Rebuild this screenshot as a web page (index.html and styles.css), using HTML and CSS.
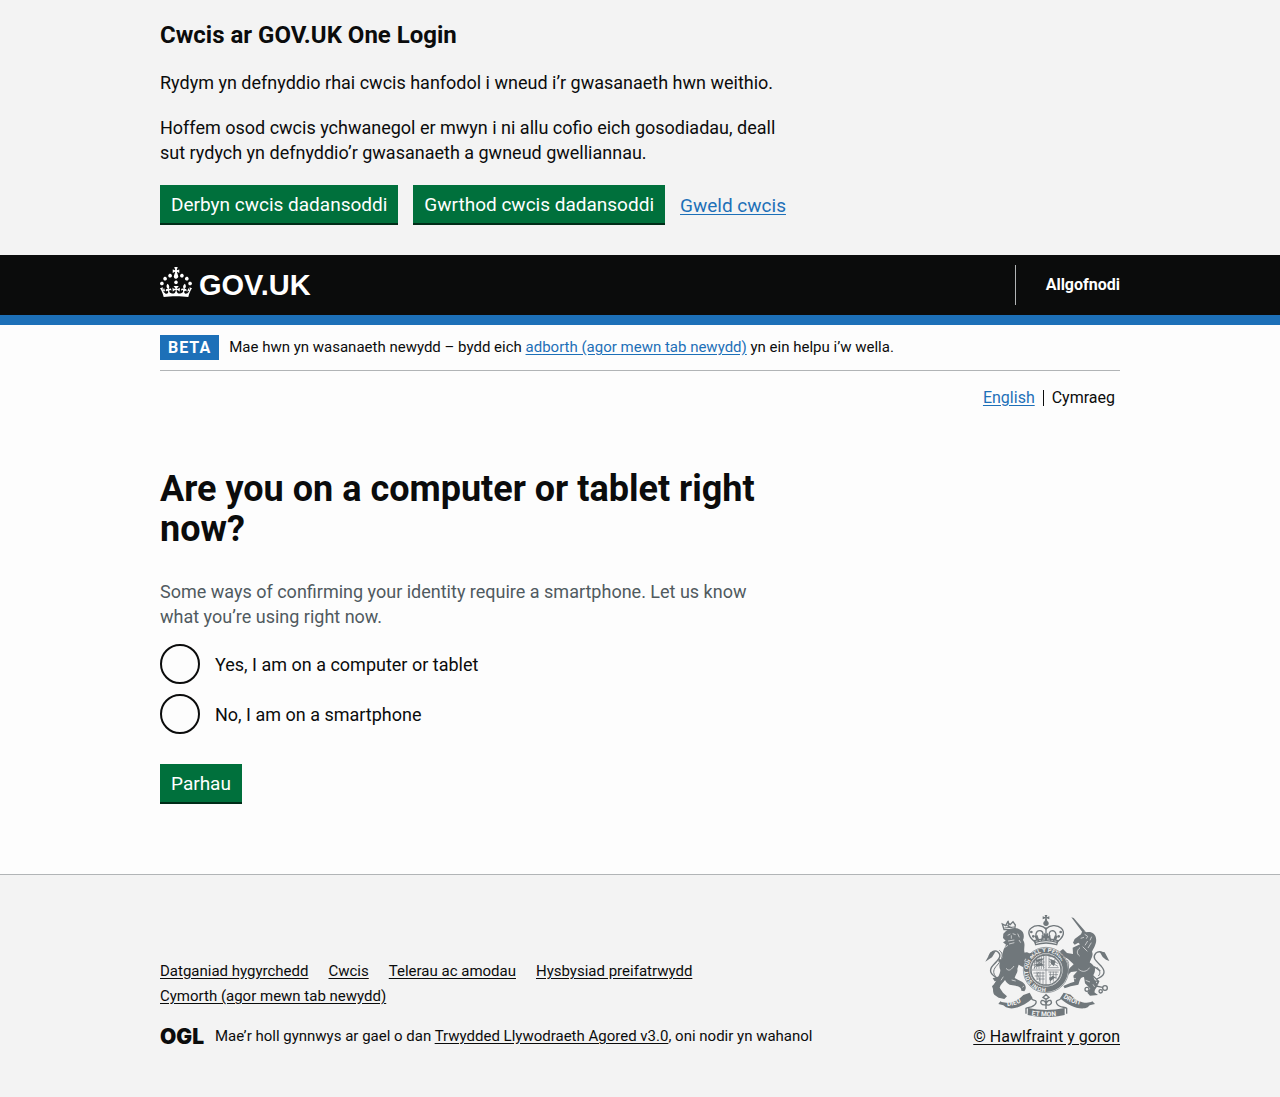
FILE: index.html
```html
<!DOCTYPE html>
<html lang="cy">
<head>
<meta charset="utf-8">
<meta name="viewport" content="width=device-width, initial-scale=1">
<title>Are you on a computer or tablet right now? – GOV.UK One Login</title>
<link rel="stylesheet" href="styles.css">
</head>
<body>
<section class="cookies" aria-label="Cwcis ar GOV.UK One Login">
  <div class="container">
    <div class="column">
      <h2 class="cookies-title">Cwcis ar GOV.UK One Login</h2>
      <p>Rydym yn defnyddio rhai cwcis hanfodol i wneud i’r gwasanaeth hwn weithio.</p>
      <p>Hoffem osod cwcis ychwanegol er mwyn i ni allu cofio eich gosodiadau, deall sut rydych yn defnyddio’r gwasanaeth a gwneud gwelliannau.</p>
    </div>
    <div class="button-group">
      <button class="button" type="button">Derbyn cwcis dadansoddi</button>
      <button class="button" type="button">Gwrthod cwcis dadansoddi</button>
      <a class="link" href="#">Gweld cwcis</a>
    </div>
  </div>
</section>

<header class="header">
  <div class="container header-row">
    <a class="logo" href="#">
      <svg class="crown" viewBox="0 0 32 30" width="32" height="30" aria-hidden="true"><path d="M22.6 10.4c-1 .4-2-.1-2.4-1-.4-.9.1-2 1-2.4.9-.4 2 .1 2.4 1s-.1 2-1 2.4m-5.9 6.7c-.9.4-2-.1-2.4-1-.4-.9.1-2 1-2.4.9-.4 2 .1 2.4 1s-.1 2-1 2.4m10.8-3.7c-1 .4-2-.1-2.4-1-.4-.9.1-2 1-2.4.9-.4 2 .1 2.4 1s0 2-1 2.4m3.3 4.8c-1 .4-2-.1-2.4-1-.4-.9.1-2 1-2.4.9-.4 2 .1 2.4 1s-.1 2-1 2.4M17 4.7l2.3 1.2V2.5l-2.3.7-.2-.2.9-3h-3.4l.9 3-.2.2c-.1.1-2.3-.7-2.3-.7v3.4L15 4.7c.1.1.1.2.2.2l-1.3 4c-.1.2-.1.4-.1.6 0 1.1.8 2 1.9 2.2h.7c1-.2 1.9-1.1 1.9-2.1 0-.2 0-.4-.1-.6l-1.3-4c-.1-.2 0-.2.1-.3m-7.6 5.7c.9.4 2-.1 2.4-1 .4-.9-.1-2-1-2.4-.9-.4-2 .1-2.4 1s0 2 1 2.4m-5 3c.9.4 2-.1 2.4-1 .4-.9-.1-2-1-2.4-.9-.4-2 .1-2.4 1s.1 2 1 2.4m-3.2 4.8c.9.4 2-.1 2.4-1 .4-.9-.1-2-1-2.4-.9-.4-2 .1-2.4 1s0 2 1 2.4m14.8 11c4.4 0 8.6.3 12.3.8 1.1-4.5 2.4-7 3.7-8.8l-2.5-.9c.2 1.3.3 1.9 0 2.7-.4-.4-.8-1.1-1.1-2.3l-1.2 4c.7-.5 1.3-.8 2-.9-1.1 2.5-2.6 3.1-3.5 3-1.1-.2-1.7-1.2-1.5-2.1.3-1.2 1.5-1.5 2.1-.1 1.1-2.3-.8-3-2-2.3 1.9-1.9 2.1-3.5.6-5.6-2.1 1.6-2.1 3.2-1.2 5.5-1.2-1.4-3.2-.6-2.5 1.6.9-1.4 2.1-.5 1.9.8-.2 1.1-1.7 2.1-3.5 1.9-2.7-.2-2.9-2.1-2.9-3.6.7-.1 1.9.5 2.9 1.9l.4-4.3c-1.1 1.1-2.1 1.4-3.2 1.4.4-1.2 2.1-3 2.1-3h-5.4s1.7 1.9 2.1 3c-1.1 0-2.1-.2-3.2-1.4l.4 4.3c1-1.4 2.2-2 2.9-1.9-.1 1.5-.2 3.4-2.9 3.6-1.9.2-3.4-.8-3.5-1.9-.2-1.3 1-2.2 1.9-.8.7-2.3-1.2-3-2.5-1.6.9-2.2.9-3.9-1.2-5.5-1.5 2-1.3 3.7.6 5.6-1.2-.7-3.1 0-2 2.3.6-1.4 1.8-1.1 2.1.1.2.9-.3 1.9-1.5 2.1-.9.2-2.4-.5-3.5-3 .6 0 1.2.3 2 .9l-1.2-4c-.3 1.1-.7 1.9-1.1 2.3-.3-.8-.2-1.4 0-2.7l-2.9.9C1.3 23 2.6 25.5 3.7 30c3.7-.5 7.9-.8 12.3-.8"/></svg>
      <span class="logo-text">GOV.UK</span>
    </a>
    <nav class="account" aria-label="Cyfrif"><a href="#">Allgofnodi</a></nav>
  </div>
</header>

<div class="container">
  <div class="phase">
    <strong class="tag">BETA</strong>
    <span>Mae hwn yn wasanaeth newydd – bydd eich <a class="link" href="#">adborth (agor mewn tab newydd)</a> yn ein helpu i’w wella.</span>
  </div>
  <nav class="languages" aria-label="Dewis iaith">
    <a class="link" href="#">English</a>
    <span class="language-current" aria-current="true">Cymraeg</span>
  </nav>

  <main class="main">
    <form class="column">
      <fieldset class="question" aria-describedby="device-hint">
        <legend><h1>Are you on a computer or tablet right now?</h1></legend>
        <p class="hint" id="device-hint">Some ways of confirming your identity require a smartphone. Let us know what you’re using right now.</p>
        <div class="radios">
          <div class="radio-row">
            <input class="radio" type="radio" name="device" id="device-computer" value="computer">
            <label for="device-computer">Yes, I am on a computer or tablet</label>
          </div>
          <div class="radio-row">
            <input class="radio" type="radio" name="device" id="device-phone" value="smartphone">
            <label for="device-phone">No, I am on a smartphone</label>
          </div>
        </div>
      </fieldset>
      <button class="button" type="button">Parhau</button>
    </form>
  </main>
</div>

<footer class="footer">
  <div class="container footer-row">
    <div class="footer-main">
      <ul class="footer-links">
        <li><a href="#">Datganiad hygyrchedd</a></li>
        <li><a href="#">Cwcis</a></li>
        <li><a href="#">Telerau ac amodau</a></li>
        <li><a href="#">Hysbysiad preifatrwydd</a></li>
        <li><a href="#">Cymorth (agor mewn tab newydd)</a></li>
      </ul>
      <div class="licence">
        <span class="ogl">OGL</span>
        <span>Mae’r holl gynnwys ar gael o dan <a href="#">Trwydded Llywodraeth Agored v3.0</a>, oni nodir yn wahanol</span>
      </div>
    </div>
    <a class="crest-link" href="#">
      <svg class="crest" viewBox="45 30 375 306" width="125" height="102" aria-hidden="true">
        <defs>
          <path id="motto-left" d="M112 303Q146 302 186 270"/>
          <path id="motto-mid" d="M185 331Q228 338 284 330"/>
          <path id="motto-right" d="M279 278Q312 302 364 304"/>
          <path id="garter" d="M228 249A54 54 0 1 1 229 249"/>
        </defs>
        <g class="line">
          <path d="M88 222C60 210 55 196 70 180C88 162 96 152 84 141C74 133 60 141 57 154" stroke-width="4"/>
          <path d="M80 218C66 204 70 192 82 180C98 162 102 146 88 136" stroke-width="3"/>
          <path d="M380 222C404 212 408 200 394 184C376 166 366 158 377 145C388 135 404 142 408 158" stroke-width="4"/>
          <path d="M385 213C394 204 388 194 380 186" stroke-width="3"/>
        </g>
        <g class="solid">
          <path d="M46 170L62 142L78 137L66 157L58 162Z"/>
          <path d="M418 168L404 142L388 139L398 156L408 164Z"/>
          <path d="M100 86L108 78C118 70 138 65 148 73C162 78 164 95 159 105C169 120 158 132 165 146L161 164L170 180C174 191 178 198 169 203L160 187L146 179L142 192C145 201 136 210 134 219L157 231C167 238 171 248 163 259L154 257C154 247 146 243 128 241C114 240 109 231 105 225C99 234 91 239 89 248L99 263L111 274L103 282L86 278L75 271C66 266 69 244 74 235C81 222 91 207 91 195C84 180 91 168 97 158C96 140 103 128 108 119L99 112L107 107L99 99Z"/>
          <path d="M101 176L84 169L88 162L105 167ZM68 220L94 212L90 225L74 229ZM66 244L81 228L83 242L72 260ZM151 150C170 136 178 142 181 153L169 159L158 171Z"/>
          <path d="M304 37L311 39L345 78L337 81Z"/>
          <path d="M314 102L333 88L338 76L350 82C363 78 377 87 378 100C381 115 372 128 366 140C372 151 361 163 359 173C377 181 378 197 371 208C367 220 380 231 383 242L371 260L384 270L360 272L352 263L361 251L345 235L342 216C329 217 330 227 325 239L302 244L284 250L280 243L301 234L313 230L310 212L322 199L303 201L291 213L284 209L300 188L311 178L294 162L275 151L270 139L279 132L291 144L309 147L308 128L330 118L325 113L314 119L309 113Z"/>
        </g>
        <g class="cut">
          <path d="M113 91L121 87M128 86L137 89M124 91V101M114 108L133 105M117 117L133 113M143 86L148 97M147 105L152 113M103 128L114 121M108 190C118 202 126 191 132 183M93 226L100 215M125 225L137 228M157 247L162 243M164 188L167 194"/>
          <path d="M332 100L342 97M344 88L353 94L349 101M353 108L345 121M365 95L360 106M364 113L354 129M330 128C320 136 319 146 329 153M338 125L352 139M325 192C339 205 352 198 359 188M347 226L360 231M369 238L374 246M302 221L318 221"/>
        </g>
        <g class="line">
          <path d="M102 74L97 57L107 62L113 51L120 59L129 50L136 60L134 74Z" stroke-width="4"/>
          <path d="M103 69L134 66M115 47V66M109 61L126 68" stroke-width="3"/>
          <path d="M358 173C370 184 362 194 352 202L365 211L374 186L391 198M369 213L386 229L377 243L398 247" stroke-width="4"/>
          <circle cx="351" cy="253" r="6"/><circle cx="366" cy="258" r="6"/><circle cx="405" cy="249" r="7"/><circle cx="392" cy="259" r="5"/><circle cx="379" cy="233" r="5"/>
        </g>
        <g class="line crest-crown">
          <path d="M197 112C177 99 170 79 184 69C199 57 220 62 228 72C238 61 260 57 274 70C287 83 278 101 259 112"/>
          <path d="M207 109C190 91 199 76 211 77C224 80 219 97 214 108M249 109C264 92 258 78 247 77C233 79 237 96 243 108M228 67V108"/>
          <path d="M193 107Q228 96 264 107L260 119Q228 109 197 119ZM196 112Q228 102 261 112"/>
        </g>
        <g class="solid">
          <circle cx="228" cy="55" r="8"/><path d="M224 30H232L230 37L238 34V43L230 40L232 49H224L226 40L218 43V34L226 37Z"/>
          <path d="M222 83L228 89L234 83V93L241 90V101L231 99V106H225V99L215 101V90L222 93ZM194 94L202 90L207 103L199 106ZM250 103L255 90L263 95L258 106Z"/>
          <circle cx="184" cy="81" r="4"/><circle cx="190" cy="94" r="4"/><circle cx="272" cy="81" r="4"/><circle cx="266" cy="94" r="4"/>
        </g>
        <circle class="paper" cx="228" cy="195" r="68"/>
        <circle class="ring" cx="228" cy="195" r="58"/>
        <circle class="paper" cx="228" cy="195" r="48"/>
        <text class="garter-text"><textPath href="#garter">HONI SOIT QUI MAL Y PENSE</textPath></text>
        <circle class="line" cx="228" cy="195" r="45" stroke-width="3"/>
        <g class="line fine">
          <path d="M186 195H270M228 152V239M194 164V192M200 159V192M207 156V192M214 154V192M221 152V192M188 171H224M186 180H224M196 161L223 188M223 159L191 190M235 155H257M234 188H266M237 158V184M265 176L237 162M264 184L237 169M256 162L238 185M190 204H224M194 213H224M201 222H224M201 200V225M210 200V234M219 200V237M207 201C194 209 217 222 206 230M235 201H266M237 209H264M237 218H259M241 200V235M250 200V230M258 200V222"/>
          <path d="M170 157C181 146 194 147 202 141M164 164C155 176 163 184 164 193M255 142C273 145 284 155 284 164M292 165C302 181 291 189 293 204"/>
        </g>
        <g class="solid">
          <path d="M168 157L178 145L188 143L178 159L169 169ZM267 144L279 154L286 172L275 161ZM195 165L218 160L218 165L201 171ZM195 177L216 174L220 181L201 185ZM241 162L257 168L252 184L243 176ZM237 221L248 212L256 217L241 229Z"/>
          <path d="M91 289C109 300 144 289 160 270L179 263L188 280C164 301 132 318 108 307L100 301L85 297ZM367 289C349 300 318 289 302 269L281 263L270 280C294 302 331 318 353 307L359 301L375 297ZM174 309Q228 321 284 309V330Q228 343 173 330Z"/>
        </g>
        <g class="line">
          <path d="M158 276C176 264 182 285 194 286Q201 287 197 296C190 308 176 306 168 310V326M302 275C284 264 274 285 263 286Q256 288 261 297C268 309 284 305 290 310V326"/>
          <path d="M228 312V280M228 299C214 302 208 292 216 286Q228 287 228 299Q230 285 242 286C249 296 238 303 228 299M228 283L219 277L228 269L237 277Z"/>
        </g>
        <g class="motto-text">
          <text><textPath href="#motto-left">DIEU</textPath></text>
          <text><textPath href="#motto-mid">ET MON</textPath></text>
          <text><textPath href="#motto-right">DROIT</textPath></text>
        </g>
      </svg>
      <span>© Hawlfraint y goron</span>
    </a>
  </div>
</footer>
</body>
</html>
```

FILE: styles.css
```css
* { box-sizing: border-box; }

body {
  margin: 0;
  background: #fdfdfd;
  color: #0b0c0c;
  font-family: Roboto, "Liberation Sans", Arial, sans-serif;
  font-size: 18px;
  line-height: 25px;
}

.container {
  max-width: 960px;
  margin: 0 auto;
}

.column { max-width: 630px; }

p { margin: 0 0 20px; }

.link { color: #1d70b8; text-underline-offset: 2px; }

.cookies {
  padding: 20px 0 30px;
  background: #f3f3f3;
}

.cookies-title {
  margin: 0 0 20px;
  font-size: 24px;
  line-height: 30px;
}

.button-group {
  display: flex;
  flex-wrap: wrap;
  align-items: center;
  gap: 15px;
  font-size: 19px;
}

.button {
  height: 38px;
  margin: 0 0 2px;
  padding: 0 11px;
  border: 0;
  background: #00703c;
  box-shadow: 0 2px 0 #002d18;
  color: #fff;
  font-family: inherit;
  font-size: 19px;
  cursor: pointer;
}

.header {
  border-bottom: 10px solid #1d70b8;
  background: #0b0c0c;
}

.header-row {
  display: flex;
  align-items: center;
  justify-content: space-between;
  height: 60px;
}

.logo {
  display: flex;
  align-items: center;
  gap: 7px;
  color: #fff;
  text-decoration: none;
}

.crown { fill: #fff; margin-bottom: 6px; }

.logo-text {
  font-family: "Liberation Sans", Arial, sans-serif;
  font-size: 29px;
  font-weight: 700;
  line-height: 30px;
}

.account {
  padding-left: 30px;
  border-left: 1px solid #b1b4b6;
  font-size: 16px;
  font-weight: 700;
  line-height: 40px;
}

.account a { color: #fff; text-decoration: none; }

.phase {
  display: flex;
  align-items: center;
  gap: 10px;
  padding: 10px 0;
  border-bottom: 1px solid #b1b4b6;
  font-size: 15px;
}

.tag {
  padding: 0 8px;
  background: #1d70b8;
  color: #fff;
  font-size: 16px;
  letter-spacing: 1px;
}

.languages {
  display: flex;
  align-items: center;
  justify-content: flex-end;
  gap: 8px;
  padding: 14px 5px 0 0;
  font-size: 16px;
}

.language-current {
  padding-left: 8px;
  border-left: 1px solid #0b0c0c;
  line-height: 16px;
}

.main { padding: 59px 0 70px; }

.question {
  min-width: 0;
  margin: 0 0 30px;
  padding: 0;
  border: 0;
}

.question legend { padding: 0; }

h1 {
  margin: 0 0 30px;
  font-size: 36px;
  line-height: 40px;
}

.hint { margin: 0 0 15px; color: #505a5f; }

.radios { display: grid; gap: 10px; }

.radio-row { display: flex; align-items: center; gap: 15px; }

.radio {
  appearance: none;
  flex: none;
  width: 40px;
  height: 40px;
  margin: 0;
  border: 2px solid #0b0c0c;
  border-radius: 50%;
  background: transparent;
}

.radio:checked { background: radial-gradient(#0b0c0c 10px, transparent 11px); }

.footer {
  padding: 40px 0 48px;
  border-top: 1px solid #b1b4b6;
  background: #f3f3f3;
  font-size: 15px;
}

.footer a { color: #0b0c0c; text-underline-offset: 2px; }

.footer-row {
  display: flex;
  align-items: flex-end;
  justify-content: space-between;
  gap: 30px;
}

.footer-main { flex: 1; }

.footer-links {
  display: flex;
  flex-wrap: wrap;
  column-gap: 20px;
  max-width: 630px;
  margin: 0 0 15px;
  padding: 0;
  list-style: none;
}

.licence { display: flex; align-items: center; gap: 11px; }

.ogl {
  min-width: 41px;
  font-family: Inter, "Liberation Sans", sans-serif;
  font-size: 21px;
  font-weight: 900;
}

.crest-link {
  display: flex;
  flex-direction: column;
  align-items: flex-end;
  gap: 7px;
  font-size: 16px;
}

.crest { margin-right: 10px; fill: none; }
.crest .solid { fill: #70777b; }
.crest .line { stroke: #70777b; stroke-width: 4; fill: none; }
.crest .fine { stroke-width: 2; }
.crest .crest-crown { stroke-width: 4; }
.crest .cut { stroke: #f3f3f3; stroke-width: 2; }
.crest .paper { fill: #f3f3f3; stroke: #70777b; stroke-width: 2; }
.crest .ring { stroke: #70777b; stroke-width: 16; }
.garter-text { fill: #f3f3f3; font-size: 17px; font-weight: 700; }
.motto-text { fill: #f3f3f3; font-size: 20px; font-weight: 700; }
```
